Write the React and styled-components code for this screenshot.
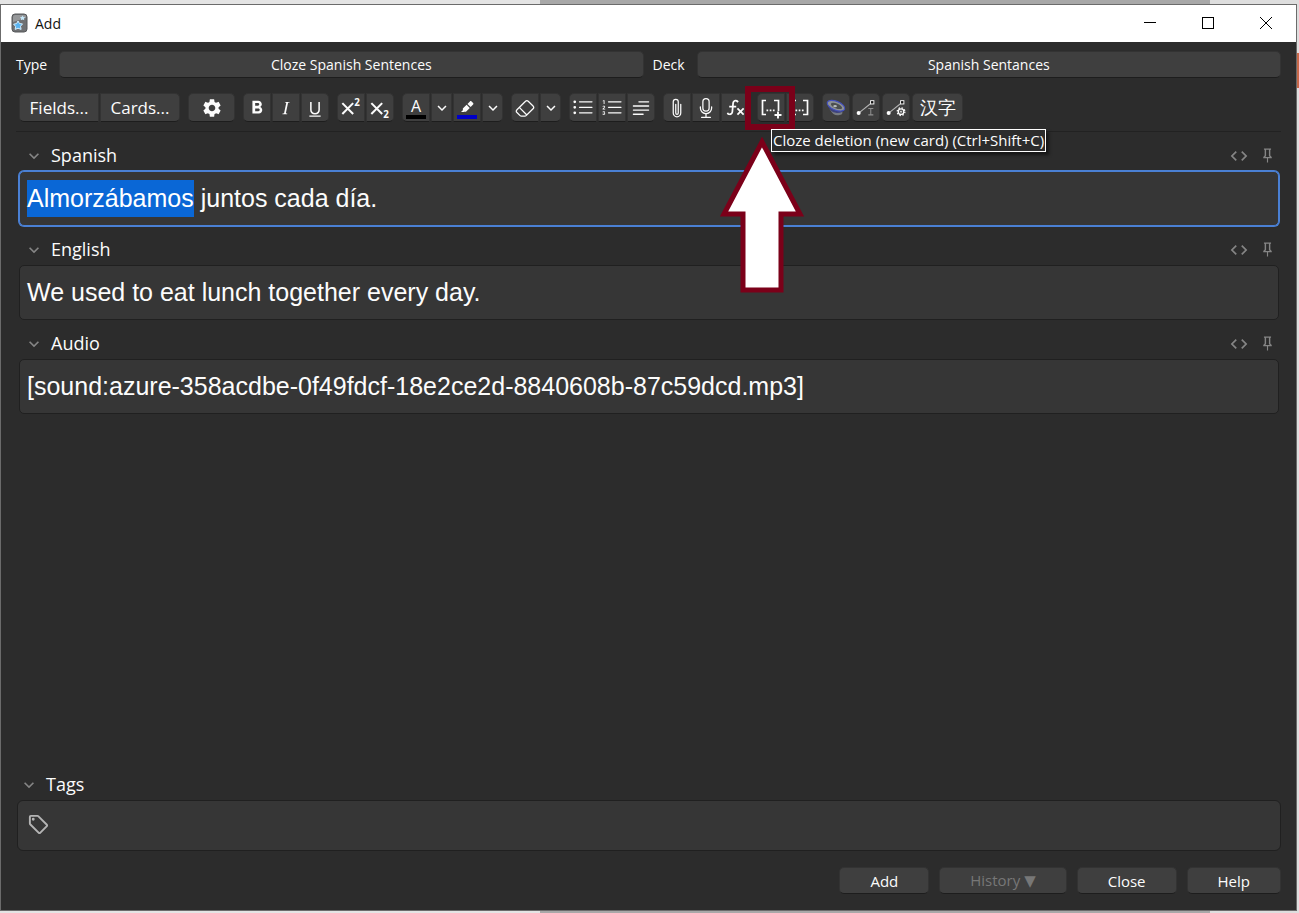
import React, { useEffect, useRef } from 'react';
import styled, { createGlobalStyle, css } from 'styled-components';
import {
  BsTypeItalic,
  BsTypeUnderline,
  BsEraser,
  BsListUl,
  BsListOl,
  BsTextParagraph,
  BsPaperclip,
  BsMic,
} from 'react-icons/bs';
import { MdFormatBold, MdCode, MdExpandMore, MdSettings } from 'react-icons/md';

const GlobalStyle = createGlobalStyle`
  * {
    box-sizing: border-box;
  }
  body {
    margin: 0;
    font-family: "Open Sans", "Noto Sans", sans-serif;
    color: #fcfcfc;
    background: #c9c7c8;
  }
  button, input {
    font-family: inherit;
    color: inherit;
  }
`;

const Desktop = styled.div`
  min-height: 100vh;
  display: flex;
  padding: 4px 2px 2px 0;
  background:
    linear-gradient(180deg, transparent 53px, #c8694a 53px 88px, transparent 88px) right / 2px 100% no-repeat,
    linear-gradient(90deg, #e4e4e4 0 540px, #a8a8a8 540px 1210px, #dedede 1210px);
`;

const Window = styled.main`
  flex: 1;
  display: flex;
  flex-direction: column;
  background: #2c2c2c;
  border: 1px solid #6b6b6b;
`;

const TitleBar = styled.header`
  display: flex;
  align-items: center;
  height: 37px;
  padding: 0 1px 1px 10px;
  background: #fff;
  color: #111;
`;

const Title = styled.h1`
  flex: 1;
  margin: 0 0 0 7px;
  font-size: 14px;
  font-weight: 400;
`;

const CaptionButton = styled.button`
  width: 58px;
  height: 36px;
  padding: 0;
  border: 0;
  background: none;
  color: #000;
  display: flex;
  align-items: center;
  justify-content: center;
`;

const Content = styled.div`
  flex: 1;
  display: flex;
  flex-direction: column;
  padding: 9px 15px 16px;
`;

const raised = css`
  background: #3f3f3f;
  border: 1px solid #333;
  border-bottom-color: #1d1d1d;
`;

const Choosers = styled.div`
  display: grid;
  grid-template-columns: auto 1fr auto 1fr;
  align-items: center;
  font-size: 14px;
`;

const ChooserLabel = styled.span`
  padding: 0 12px 0 ${props => (props.$first ? 0 : 9)}px;
`;

const PushButton = styled.button`
  ${raised}
  height: 27px;
  padding: 0 ${props => (props.$wide ? 0 : 30)}px;
  border-radius: 5px;
  font-size: ${props => (props.$wide ? 14 : 15)}px;
  line-height: 20px;
  &:disabled {
    color: #777;
  }
`;

const MenuArrow = styled.span`
  font-family: "DejaVu Sans", sans-serif;
`;

const Toolbar = styled.div`
  display: flex;
  gap: 8px;
  padding: 15px 3px 9px;
  border-bottom: 1px solid #222;
`;

const Group = styled.div`
  position: relative;
  display: flex;
  gap: ${props => (props.$apart ? 2 : 1)}px;
  & > button {
    border-radius: ${props => (props.$apart ? 5 : 0)}px;
  }
  & > button:first-child {
    border-top-left-radius: 5px;
    border-bottom-left-radius: 5px;
  }
  & > button:last-of-type {
    border-top-right-radius: 5px;
    border-bottom-right-radius: 5px;
  }
`;

const ToolButton = styled.button`
  ${raised}
  width: ${props => props.$width || 28}px;
  height: 29px;
  padding: 0;
  font-size: ${props => (props.lang ? 18 : 17)}px;
  display: flex;
  flex-direction: column;
  align-items: center;
  justify-content: center;
`;

const Letter = styled.span`
  font-size: 16px;
  line-height: 18px;
`;

const Swatch = styled.span`
  width: 20px;
  height: 4px;
  background: ${props => props.color};
`;

// marks the button that is being explained
const Highlight = styled.div`
  position: absolute;
  left: -12px;
  top: -7px;
  width: 50px;
  height: 44px;
  border: 6px solid #7b0019;
`;

const Arrow = styled.svg`
  position: absolute;
  left: -38px;
  top: 44px;
  z-index: 1;
`;

const Tooltip = styled.div`
  position: absolute;
  left: 14px;
  top: 36px;
  z-index: 2;
  padding: 0 1px;
  border: 1px solid #fff;
  background: #2c2c2c;
  font-size: 15px;
  line-height: 21px;
  white-space: nowrap;
  box-shadow: 3px 3px 3px rgba(0, 0, 0, 0.5);
`;

const Fields = styled.div`
  flex: 1;
  padding: 0 2px 0 3px;
`;

const FieldHeader = styled.div`
  display: flex;
  align-items: center;
  height: ${props => (props.$tags ? 30 : 39)}px;
  padding: ${props => (props.$tags ? '0 3px' : '8px 3px 0 5px')};
`;

const FieldLabel = styled.label`
  flex: 1;
  padding: 0 0 2px 7px;
  font-size: 18px;
  line-height: 24px;
`;

const IconButton = styled.button`
  padding: 0;
  border: 0;
  background: none;
  color: #858585;
  display: flex;
  margin-left: ${props => props.$gap || 0}px;
`;

const FieldInput = styled.textarea`
  display: block;
  width: 100%;
  height: 55px;
  padding: 8px 7px;
  border: 1px solid #202020;
  border-radius: 5px;
  background: #363636;
  color: inherit;
  font-family: "Liberation Sans", Arial, sans-serif;
  font-size: 25px;
  line-height: 37px;
  resize: none;
  overflow: hidden;
  &:focus {
    outline: none;
    border-color: #4a80d4;
    box-shadow: 0 0 0 1px #4a80d4;
  }
  &::selection {
    background: #0a67d6;
    color: #fff;
  }
`;

const TagBox = styled.div`
  display: flex;
  align-items: center;
  height: 51px;
  padding: 0 9px 2px;
  margin-left: 1px;
  border: 1px solid #202020;
  border-radius: 6px;
  background: #363636;
  color: #b4b4b4;
`;

const TagInput = styled.input`
  flex: 1;
  border: 0;
  outline: none;
  background: none;
  font-size: 18px;
`;

const Footer = styled.footer`
  display: flex;
  justify-content: flex-end;
  gap: 10px;
  padding-top: 16px;
`;

const Icon = ({ size = 20, children }) => (
  <svg width={size} height={size} viewBox="0 0 24 24" fill="currentColor" aria-hidden="true">
    {children}
  </svg>
);

const AppIcon = () => (
  <svg width="17" height="20" viewBox="0 0 17 20" aria-hidden="true">
    <rect x="1" y="1" width="15" height="18" rx="3" fill="#6f7173" stroke="#57595b" />
    <path d="M2 9L15 5V3Q15 2 13 2H4Q2 2 2 4z" fill="#96989a" />
    <path d="M7 8l1.500 2.600 3 .3-2 2.400.6 3.100L7 15.200l-2.800 1.200.4-3-2-2.200 3-.6z" fill="#58b4f2" stroke="#d4efff" />
    <path d="M11.500 2.500l.8 1.500 1.900.2-1.300 1.300.4 1.800-1.800-.8-1.600.8.300-1.800-1.300-1.300 1.800-.2z" fill="#c5e8fb" />
  </svg>
);

const ScriptIcon = ({ sub }) => (
  <Icon size={26}>
    <path d="M4 7.500L14 17.500M14 7.500L4 17.500" stroke="currentColor" strokeWidth="1.900" />
    <text
      x="15"
      y={sub ? 21 : 10}
      fontSize="9"
      fontWeight="700"
      fontFamily="Open Sans, sans-serif"
    >
      2
    </text>
  </Icon>
);

const BrushIcon = () => (
  <Icon size={18}>
    <path d="M4,17L6.75,14.25L6.72,14.23C6.14,13.64 6.14,12.69 6.72,12.11L11.46,7.37L15.7,11.61L10.96,16.35C10.39,16.93 9.46,16.93 8.87,16.37L8.24,17H4M15.91,2.91C16.5,2.33 17.45,2.33 18.03,2.91L20.16,5.03C20.74,5.62 20.74,6.57 20.16,7.16L16.86,10.45L12.62,6.21L15.91,2.91Z" transform="translate(0 3)" />
  </Icon>
);

const FunctionIcon = () => (
  <Icon size={21}>
    <path d="M12.42,5.29C11.32,5.19 10.35,6 10.25,7.11L10,10H12.82V12H9.82L9.38,17.07C9.18,19.27 7.24,20.9 5.04,20.7C3.79,20.59 2.66,19.9 2,18.83L3.5,17.33C3.83,18.38 4.96,18.97 6,18.63C6.78,18.39 7.33,17.7 7.4,16.89L7.82,12H4.82V10H8L8.27,6.93C8.46,4.73 10.39,3.1 12.6,3.28C13.86,3.39 15,4.09 15.66,5.17L14.16,6.67C13.91,5.9 13.23,5.36 12.42,5.29M22,13.65L20.59,12.24L17.76,15.07L14.93,12.24L13.5,13.65L16.35,16.5L13.5,19.31L14.93,20.72L17.76,17.89L20.59,20.72L22,19.31L19.17,16.5L22,13.65Z" />
  </Icon>
);

const ClozeNewIcon = () => (
  <Icon size={24}>
    <path d="M7 4.500H3.500V18.500H7M15 4.500H19.500V15" fill="none" stroke="currentColor" strokeWidth="1.700" />
    <path d="M19 15.500V22.500M15.500 19H22.500" stroke="currentColor" strokeWidth="1.900" />
    <path d="M7.500 13.500h1.700v1.700h-1.700zM10.700 13.500h1.700v1.700h-1.700zM13.900 13.500h1.700v1.700h-1.700z" />
  </Icon>
);

const ClozeIcon = () => (
  <Icon size={24}>
    <path d="M8 4.500H4.500V18.500H8M15 4.500H19.500V18.500H15" fill="none" stroke="currentColor" strokeWidth="1.700" />
    <path d="M7.500 13.500h1.700v1.700h-1.700zM10.700 13.500h1.700v1.700h-1.700zM13.900 13.500h1.700v1.700h-1.700z" />
  </Icon>
);

const DishIcon = () => (
  <Icon size={22}>
    <path d="M5 13Q10 22 16 19.500Q21 19 18 13z" fill="#777b82" />
    <path d="M2.500 8Q5 17 13 17.500Q20 17.500 21.500 13z" fill="#3d427c" />
    <ellipse cx="12" cy="9.500" rx="10.200" ry="4.800" transform="rotate(22 12 9.500)" fill="#8e9296" stroke="#4350c0" strokeWidth="1.200" />
    <ellipse cx="12.500" cy="9.800" rx="6.500" ry="2.600" transform="rotate(22 12.500 9.800)" fill="#4c4f50" />
    <ellipse cx="11" cy="10" rx="2" ry="1.200" fill="#b9bcbd" />
  </Icon>
);

const NodeIcon = ({ gear }) => (
  <Icon size={22}>
    <path d="M4 17.500L18.500 6" stroke="#b8b8b8" strokeWidth="1.100" />
    <circle cx="4" cy="17.500" r="2.200" />
    <rect x="17" y="4" width="3.600" height="3.600" fill="#111" stroke="currentColor" />
    {gear ? (
      <g fill="none" stroke="currentColor">
        <circle cx="17.500" cy="16" r="3" strokeWidth="1.400" />
        <circle cx="17.500" cy="16" r="4.200" strokeWidth="1.400" strokeDasharray="1.600 1.700" />
        <circle cx="17.500" cy="16" r=".7" />
      </g>
    ) : (
      <path d="M14.500 12.500H20M14.500 19.500H20M17.200 12.500V19.500" stroke="#8f8f8f" strokeWidth="1.100" />
    )}
  </Icon>
);

const PinIcon = () => (
  <Icon size={17}>
    <path d="M16,12V4H17V2H7V4H8V12L6,14V16H11.2V22H12.8V16H18V14L16,12M8.8,14L10,12.8V4H14V12.8L15.2,14H8.8Z" />
  </Icon>
);

const TagIcon = () => (
  <Icon size={23}>
    <path d="M21.41,11.58L12.41,2.58C12.04,2.21 11.53,2 11,2H4A2,2 0 0,0 2,4V11C2,11.53 2.21,12.04 2.59,12.41L11.58,21.41C11.95,21.78 12.47,22 13,22C13.53,22 14.04,21.79 14.41,21.41L21.41,14.41C21.79,14.04 22,13.53 22,13C22,12.47 21.79,11.96 21.41,11.58M13,20L4,11V4H11L20,13M6.5,5A1.5,1.5 0 1,1 5,6.5A1.5,1.5 0 0,1 6.5,5Z" />
  </Icon>
);

const fields = [
  { id: 'spanish', name: 'Spanish', value: 'Almorzábamos juntos cada día.' },
  { id: 'english', name: 'English', value: 'We used to eat lunch together every day.' },
  { id: 'audio', name: 'Audio', value: '[sound:azure-358acdbe-0f49fdcf-18e2ce2d-8840608b-87c59dcd.mp3]' },
];

const Field = ({ id, name, value, inputRef }) => (
  <section>
    <FieldHeader>
      <IconButton aria-label={`Collapse ${name}`}><MdExpandMore size={20} /></IconButton>
      <FieldLabel htmlFor={id}>{name}</FieldLabel>
      <IconButton aria-label="Toggle HTML editor"><MdCode size={20} /></IconButton>
      <IconButton $gap={10} aria-label="Toggle sticky"><PinIcon /></IconButton>
    </FieldHeader>
    <FieldInput id={id} ref={inputRef} rows={1} defaultValue={value} spellCheck={false} />
  </section>
);

const EditorToolbar = () => (
  <Toolbar>
    <Group>
      <ToolButton $width={80}>Fields...</ToolButton>
      <ToolButton $width={80}>Cards...</ToolButton>
    </Group>
    <Group>
      <ToolButton $width={47} aria-label="Options"><MdSettings size={22} /></ToolButton>
    </Group>
    <Group>
      <ToolButton aria-label="Bold"><MdFormatBold size={22} /></ToolButton>
      <ToolButton aria-label="Italic"><BsTypeItalic size={20} /></ToolButton>
      <ToolButton aria-label="Underline"><BsTypeUnderline size={20} /></ToolButton>
    </Group>
    <Group>
      <ToolButton aria-label="Superscript"><ScriptIcon /></ToolButton>
      <ToolButton aria-label="Subscript"><ScriptIcon sub /></ToolButton>
    </Group>
    <Group>
      <ToolButton aria-label="Text color">
        <Letter>A</Letter>
        <Swatch color="#000" />
      </ToolButton>
      <ToolButton $width={21} aria-label="Change text color"><MdExpandMore size={18} /></ToolButton>
      <ToolButton aria-label="Highlight color">
        <BrushIcon />
        <Swatch color="#0000c8" />
      </ToolButton>
      <ToolButton $width={21} aria-label="Change highlight color"><MdExpandMore size={18} /></ToolButton>
    </Group>
    <Group>
      <ToolButton aria-label="Remove formatting"><BsEraser size={20} /></ToolButton>
      <ToolButton $width={21} aria-label="Formatting to remove"><MdExpandMore size={18} /></ToolButton>
    </Group>
    <Group>
      <ToolButton aria-label="Unordered list"><BsListUl size={22} /></ToolButton>
      <ToolButton aria-label="Ordered list"><BsListOl size={22} /></ToolButton>
      <ToolButton aria-label="Alignment"><BsTextParagraph size={22} /></ToolButton>
    </Group>
    <Group>
      <ToolButton aria-label="Attach file"><BsPaperclip size={20} /></ToolButton>
      <ToolButton aria-label="Record audio"><BsMic size={20} /></ToolButton>
      <ToolButton aria-label="Equations"><FunctionIcon /></ToolButton>
    </Group>
    <Group>
      <ToolButton aria-label="Cloze deletion (new card)" aria-describedby="cloze-tip"><ClozeNewIcon /></ToolButton>
      <ToolButton aria-label="Cloze deletion (same card)"><ClozeIcon /></ToolButton>
      <Highlight />
      <Arrow width="86" height="158" viewBox="0 0 86 158" aria-hidden="true">
        <path
          d="M43 5L81 77H62V153H24V77H5z"
          fill="#fff"
          stroke="#7b0019"
          strokeWidth="5"
        />
      </Arrow>
      <Tooltip id="cloze-tip" role="tooltip">Cloze deletion (new card) (Ctrl+Shift+C)</Tooltip>
    </Group>
    <Group $apart>
      <ToolButton aria-label="Add speech"><DishIcon /></ToolButton>
      <ToolButton aria-label="Edit node text"><NodeIcon /></ToolButton>
      <ToolButton aria-label="Node settings"><NodeIcon gear /></ToolButton>
      <ToolButton $width={51} lang="zh">汉字</ToolButton>
    </Group>
  </Toolbar>
);

const App = () => {
  const firstField = useRef(null);

  // start with the first word picked, ready for the cloze button
  useEffect(() => {
    firstField.current.focus();
    firstField.current.setSelectionRange(0, 'Almorzábamos'.length);
  }, []);

  return (
    <Desktop>
      <GlobalStyle />
      <Window>
        <TitleBar>
          <AppIcon />
          <Title>Add</Title>
          <CaptionButton aria-label="Minimize">
            <svg width="12" height="12"><path d="M0 5.500H12" stroke="currentColor" /></svg>
          </CaptionButton>
          <CaptionButton aria-label="Maximize">
            <svg width="12" height="12"><rect x=".5" y=".5" width="11" height="11" fill="none" stroke="currentColor" /></svg>
          </CaptionButton>
          <CaptionButton aria-label="Close window">
            <svg width="12" height="12"><path d="M0 0L12 12M12 0L0 12" stroke="currentColor" /></svg>
          </CaptionButton>
        </TitleBar>
        <Content>
          <Choosers>
            <ChooserLabel $first id="type-label">Type</ChooserLabel>
            <PushButton $wide aria-describedby="type-label">Cloze Spanish Sentences</PushButton>
            <ChooserLabel id="deck-label">Deck</ChooserLabel>
            <PushButton $wide aria-describedby="deck-label">Spanish Sentances</PushButton>
          </Choosers>
          <EditorToolbar />
          <Fields>
            {fields.map((field, i) => (
              <Field key={field.id} {...field} inputRef={i === 0 ? firstField : null} />
            ))}
          </Fields>
          <FieldHeader $tags>
            <IconButton aria-label="Collapse Tags"><MdExpandMore size={20} /></IconButton>
            <FieldLabel htmlFor="tags">Tags</FieldLabel>
          </FieldHeader>
          <TagBox>
            <TagIcon />
            <TagInput id="tags" />
          </TagBox>
          <Footer>
            <PushButton>Add</PushButton>
            <PushButton disabled>History <MenuArrow>▼</MenuArrow></PushButton>
            <PushButton>Close</PushButton>
            <PushButton>Help</PushButton>
          </Footer>
        </Content>
      </Window>
    </Desktop>
  );
};

export default App;
